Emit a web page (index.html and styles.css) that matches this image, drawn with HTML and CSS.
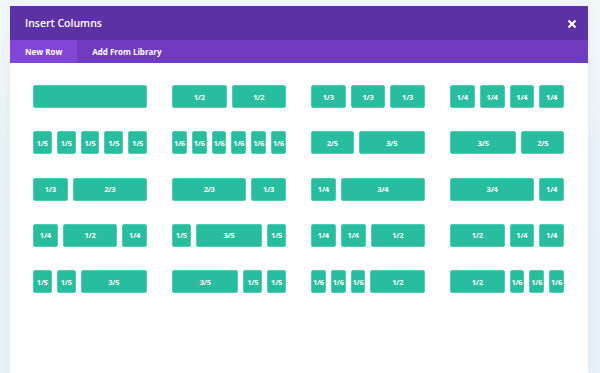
FILE: index.html
```html
<!DOCTYPE html>
<html lang="en">
<head>
  <meta charset="UTF-8" />
  <meta name="viewport" content="width=device-width, initial-scale=1.0"/>
  <title>Insert Columns</title>
  <link rel="stylesheet" href="styles.css">
</head>
<body>

  <div class="modal">
    <div class="modal-header">
      <h2>Insert Columns</h2>
      <span class="close-btn">
        <svg width="8" height="8" viewBox="0 0 8 8"><path d="M1.2 1.2 L6.8 6.8 M6.8 1.2 L1.2 6.8" stroke="#fff" stroke-width="2" stroke-linecap="square"/></svg>
      </span>
    </div>

    <div class="tabs">
      <div class="tab active">New Row</div>
      <div class="tab">Add From Library</div>
    </div>

    <div class="layouts">
      <!-- row 1 -->
      <div class="layout"><div class="col w1"></div></div>
      <div class="layout"><div class="col w2">1/2</div><div class="col w2">1/2</div></div>
      <div class="layout"><div class="col w3">1/3</div><div class="col w3">1/3</div><div class="col w3">1/3</div></div>
      <div class="layout"><div class="col w4">1/4</div><div class="col w4">1/4</div><div class="col w4">1/4</div><div class="col w4">1/4</div></div>

      <!-- row 2 -->
      <div class="layout"><div class="col w5">1/5</div><div class="col w5">1/5</div><div class="col w5">1/5</div><div class="col w5">1/5</div><div class="col w5">1/5</div></div>
      <div class="layout"><div class="col w6">1/6</div><div class="col w6">1/6</div><div class="col w6">1/6</div><div class="col w6">1/6</div><div class="col w6">1/6</div><div class="col w6">1/6</div></div>
      <div class="layout"><div class="col w25">2/5</div><div class="col w35">3/5</div></div>
      <div class="layout"><div class="col w35">3/5</div><div class="col w25">2/5</div></div>

      <!-- row 3 -->
      <div class="layout"><div class="col w3">1/3</div><div class="col w23">2/3</div></div>
      <div class="layout"><div class="col w23">2/3</div><div class="col w3">1/3</div></div>
      <div class="layout"><div class="col w4">1/4</div><div class="col w34">3/4</div></div>
      <div class="layout"><div class="col w34">3/4</div><div class="col w4">1/4</div></div>

      <!-- row 4 -->
      <div class="layout"><div class="col w4">1/4</div><div class="col w2">1/2</div><div class="col w4">1/4</div></div>
      <div class="layout"><div class="col w5">1/5</div><div class="col w35">3/5</div><div class="col w5">1/5</div></div>
      <div class="layout"><div class="col w4">1/4</div><div class="col w4">1/4</div><div class="col w2">1/2</div></div>
      <div class="layout"><div class="col w2">1/2</div><div class="col w4">1/4</div><div class="col w4">1/4</div></div>

      <!-- row 5 -->
      <div class="layout"><div class="col w5">1/5</div><div class="col w5">1/5</div><div class="col w35">3/5</div></div>
      <div class="layout"><div class="col w35">3/5</div><div class="col w5">1/5</div><div class="col w5">1/5</div></div>
      <div class="layout"><div class="col w6">1/6</div><div class="col w6">1/6</div><div class="col w6">1/6</div><div class="col w2">1/2</div></div>
      <div class="layout"><div class="col w2">1/2</div><div class="col w6">1/6</div><div class="col w6">1/6</div><div class="col w6">1/6</div></div>
    </div>
  </div>

</body>
</html>
```

FILE: styles.css
```css
* {
  box-sizing: border-box;
  margin: 0;
  padding: 0;
}

body {
  font-family: 'Open Sans', 'Noto Sans', sans-serif;
  background: linear-gradient(180deg, #f4f8fa 0%, #eaf3f9 40%, #e8f2f9 100%);
  height: 100vh;
  overflow: hidden;
  padding: 6px 12px 0 10px;
}

.modal {
  background: #fff;
  height: 100%;
  box-shadow: 0 0 12px rgba(80, 110, 140, 0.08);
}

/* header */
.modal-header {
  display: flex;
  align-items: center;
  justify-content: space-between;
  height: 34px;
  padding: 0 12px 0 15px;
  background: #5c31a3;
}

.modal-header h2 {
  font-size: 10.5px;
  font-weight: 600;
  color: #fff;
}

.close-btn {
  display: flex;
  width: 8px;
  height: 8px;
  margin-top: 1px;
}

/* tabs */
.tabs {
  display: flex;
  height: 23px;
  background: #6f3bc1;
}

.tab {
  display: flex;
  align-items: center;
  padding: 0 15px;
  font-size: 8px;
  font-weight: 700;
  color: #fff;
}

.tab.active {
  background: #8145d8;
}

/* layout grid */
.layouts {
  display: grid;
  grid-template-columns: repeat(4, 1fr);
  column-gap: 25px;
  row-gap: 23.3px;
  padding: 22px 24px 0 23px;
}

.layout {
  display: flex;
  gap: 5px;
  height: 23px;
}

.col {
  display: flex;
  align-items: center;
  justify-content: center;
  background: #29bd9f;
  border: 1px solid #4fcdb2;
  border-radius: 2px;
  color: #fff;
  font-size: 7.5px;
  font-weight: 700;
  letter-spacing: -0.2px;
}

.w1  { width: 100%; }
.w2  { width: calc((100% + 5px) / 2 - 5px); }
.w3  { width: calc((100% + 5px) / 3 - 5px); }
.w23 { width: calc((100% + 5px) * 2 / 3 - 5px); }
.w4  { width: calc((100% + 5px) / 4 - 5px); }
.w34 { width: calc((100% + 5px) * 3 / 4 - 5px); }
.w5  { width: calc((100% + 5px) / 5 - 5px); }
.w25 { width: calc((100% + 5px) * 2 / 5 - 5px); }
.w35 { width: calc((100% + 5px) * 3 / 5 - 5px); }
.w6  { width: calc((100% + 5px) / 6 - 5px); }
```
